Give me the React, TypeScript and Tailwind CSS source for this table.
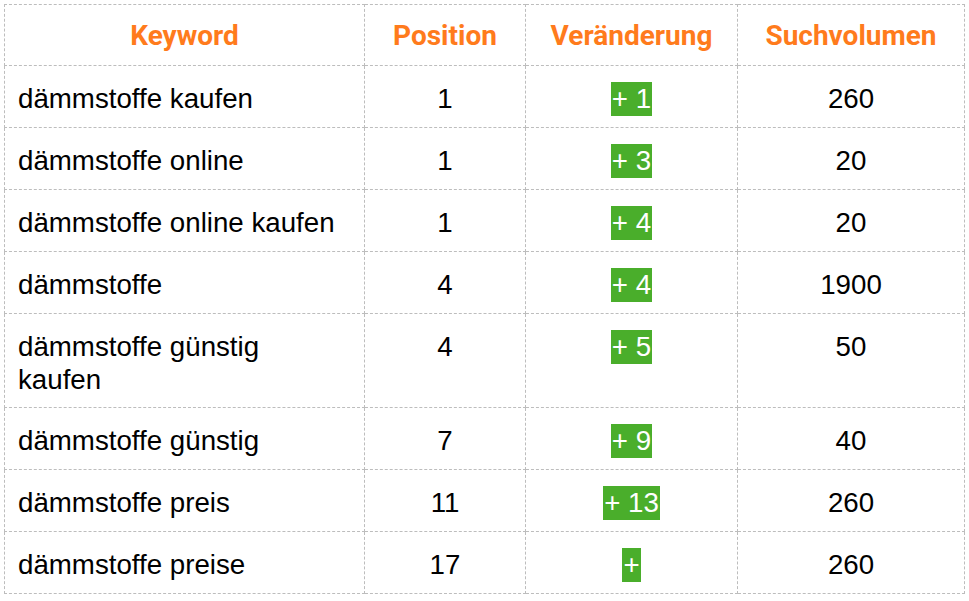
import React from "react";

const rows: { k: string; p: string; c: string; v: string }[] = [
  { k: "dämmstoffe kaufen", p: "1", c: "+ 1", v: "260" },
  { k: "dämmstoffe online", p: "1", c: "+ 3", v: "20" },
  { k: "dämmstoffe online kaufen", p: "1", c: "+ 4", v: "20" },
  { k: "dämmstoffe", p: "4", c: "+ 4", v: "1900" },
  { k: "dämmstoffe günstig kaufen", p: "4", c: "+ 5", v: "50" },
  { k: "dämmstoffe günstig", p: "7", c: "+ 9", v: "40" },
  { k: "dämmstoffe preis", p: "11", c: "+ 13", v: "260" },
  { k: "dämmstoffe preise", p: "17", c: "+", v: "260" },
];

const th =
  "border border-dashed border-[#bdbdbd] pt-[14px] pb-[13px] leading-[33px] text-center align-top font-bold text-[#ff7b1c] text-[28px] [font-family:Roboto,'Liberation_Sans',sans-serif]";
const td =
  "border border-dashed border-[#bdbdbd] pt-[16px] pb-[11px] leading-[33px] align-top text-[27.7px] text-black";

export default function App() {
  return (
    <div className="bg-white w-[969px] h-[601px] p-[4px] [font-family:'Liberation_Sans',Arial,sans-serif]">
      <table className="border-collapse table-fixed w-[960px]">
        <colgroup>
          <col className="w-[360px]" />
          <col className="w-[161px]" />
          <col className="w-[212px]" />
          <col className="w-[227px]" />
        </colgroup>
        <thead>
          <tr>
            <th className={th}>Keyword</th>
            <th className={th}>Position</th>
            <th className={th}>Veränderung</th>
            <th className={th}>Suchvolumen</th>
          </tr>
        </thead>
        <tbody>
          {rows.map((r, i) => (
            <tr key={i}>
              <td className={td + " text-left pl-[13px] pr-[20px]"}>{r.k}</td>
              <td className={td + " text-center"}>{r.p}</td>
              <td className={td + " text-center"}>
                <span className="inline-block bg-[#4aae2b] text-white px-[1px] leading-[34px] whitespace-pre">
                  {r.c}
                </span>
              </td>
              <td className={td + " text-center"}>{r.v}</td>
            </tr>
          ))}
        </tbody>
      </table>
    </div>
  );
}
